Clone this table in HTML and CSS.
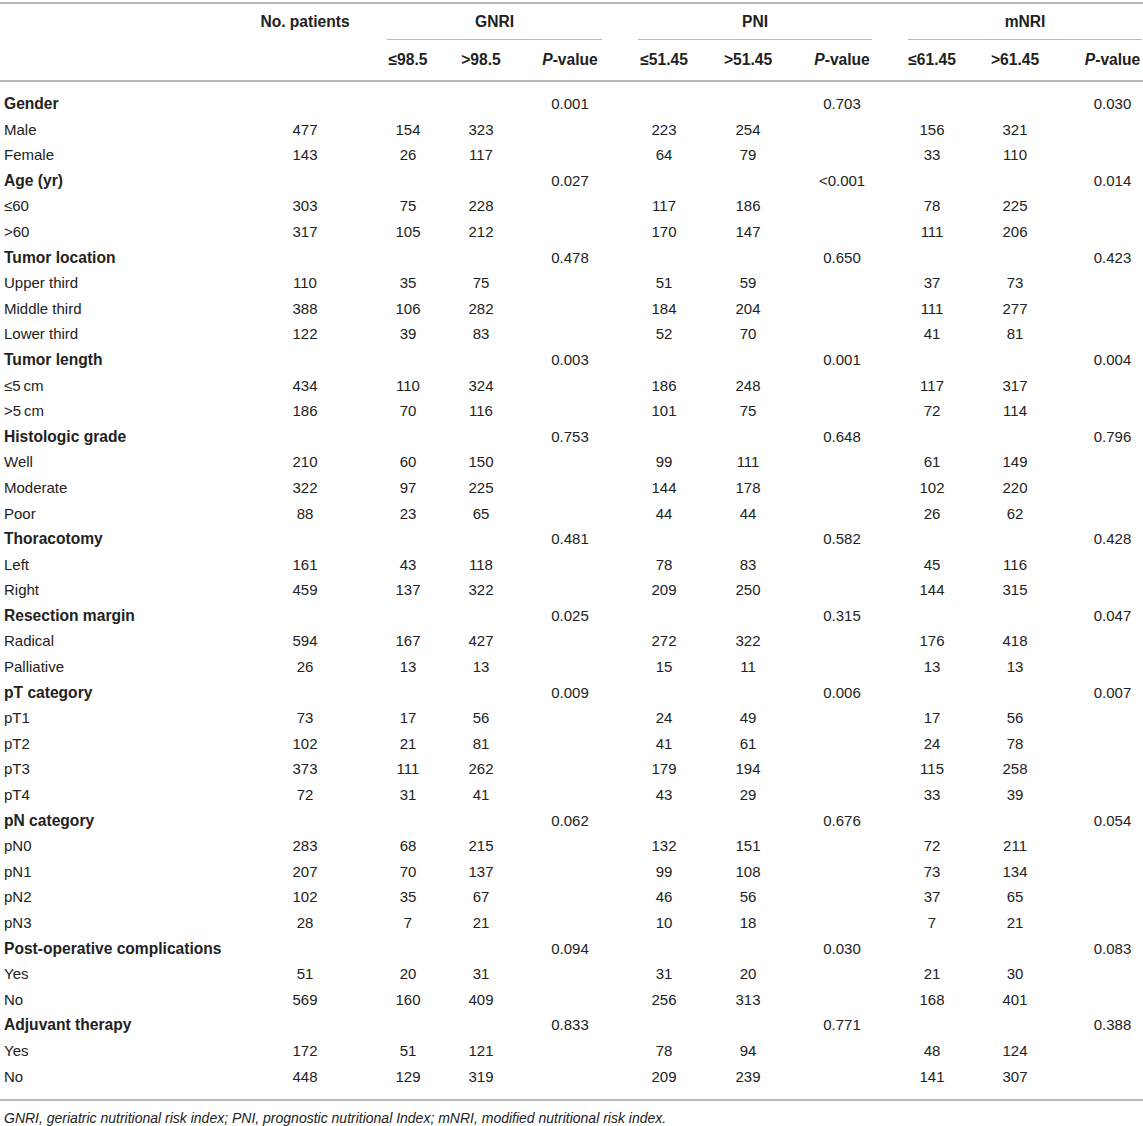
FILE: index.html
```html
<!DOCTYPE html>
<html lang="en">
<head>
    <meta charset="utf-8">
    <link rel="stylesheet" href="styles.css">
</head>
<body>
    <table class="stats">
        <colgroup>
            <col class="c-label">
            <col class="c-no">
            <col class="c-g1"><col class="c-g2"><col class="c-g3">
            <col class="c-p1"><col class="c-p2"><col class="c-p3">
            <col class="c-m1"><col class="c-m2"><col class="c-m3">
        </colgroup>
        <thead>
            <tr class="head-top">
                <th></th>
                <th>No. patients</th>
                <th colspan="3" class="group"><div class="grp grp-g">GNRI</div></th>
                <th colspan="3" class="group"><div class="grp grp-p">PNI</div></th>
                <th colspan="3" class="group"><div class="grp grp-m">mNRI</div></th>
            </tr>
            <tr class="head-sub">
                <th></th>
                <th></th>
                <th>≤98.5</th><th>&gt;98.5</th><th class="pv"><i>P</i>-value</th>
                <th>≤51.45</th><th>&gt;51.45</th><th class="pv"><i>P</i>-value</th>
                <th>≤61.45</th><th>&gt;61.45</th><th class="pv last"><i>P</i>-value</th>
            </tr>
        </thead>
        <tbody>
            <tr class="cat"><td>Gender</td><td></td><td></td><td></td><td>0.001</td><td></td><td></td><td>0.703</td><td></td><td></td><td class="last">0.030</td></tr>
            <tr><td>Male</td><td>477</td><td>154</td><td>323</td><td></td><td>223</td><td>254</td><td></td><td>156</td><td>321</td><td class="last"></td></tr>
            <tr><td>Female</td><td>143</td><td>26</td><td>117</td><td></td><td>64</td><td>79</td><td></td><td>33</td><td>110</td><td class="last"></td></tr>

            <tr class="cat"><td>Age (yr)</td><td></td><td></td><td></td><td>0.027</td><td></td><td></td><td>&lt;0.001</td><td></td><td></td><td class="last">0.014</td></tr>
            <tr><td>≤60</td><td>303</td><td>75</td><td>228</td><td></td><td>117</td><td>186</td><td></td><td>78</td><td>225</td><td class="last"></td></tr>
            <tr><td>&gt;60</td><td>317</td><td>105</td><td>212</td><td></td><td>170</td><td>147</td><td></td><td>111</td><td>206</td><td class="last"></td></tr>

            <tr class="cat"><td>Tumor location</td><td></td><td></td><td></td><td>0.478</td><td></td><td></td><td>0.650</td><td></td><td></td><td class="last">0.423</td></tr>
            <tr><td>Upper third</td><td>110</td><td>35</td><td>75</td><td></td><td>51</td><td>59</td><td></td><td>37</td><td>73</td><td class="last"></td></tr>
            <tr><td>Middle third</td><td>388</td><td>106</td><td>282</td><td></td><td>184</td><td>204</td><td></td><td>111</td><td>277</td><td class="last"></td></tr>
            <tr><td>Lower third</td><td>122</td><td>39</td><td>83</td><td></td><td>52</td><td>70</td><td></td><td>41</td><td>81</td><td class="last"></td></tr>

            <tr class="cat"><td>Tumor length</td><td></td><td></td><td></td><td>0.003</td><td></td><td></td><td>0.001</td><td></td><td></td><td class="last">0.004</td></tr>
            <tr><td>≤5&#8201;cm</td><td>434</td><td>110</td><td>324</td><td></td><td>186</td><td>248</td><td></td><td>117</td><td>317</td><td class="last"></td></tr>
            <tr><td>&gt;5&#8201;cm</td><td>186</td><td>70</td><td>116</td><td></td><td>101</td><td>75</td><td></td><td>72</td><td>114</td><td class="last"></td></tr>

            <tr class="cat"><td>Histologic grade</td><td></td><td></td><td></td><td>0.753</td><td></td><td></td><td>0.648</td><td></td><td></td><td class="last">0.796</td></tr>
            <tr><td>Well</td><td>210</td><td>60</td><td>150</td><td></td><td>99</td><td>111</td><td></td><td>61</td><td>149</td><td class="last"></td></tr>
            <tr><td>Moderate</td><td>322</td><td>97</td><td>225</td><td></td><td>144</td><td>178</td><td></td><td>102</td><td>220</td><td class="last"></td></tr>
            <tr><td>Poor</td><td>88</td><td>23</td><td>65</td><td></td><td>44</td><td>44</td><td></td><td>26</td><td>62</td><td class="last"></td></tr>

            <tr class="cat"><td>Thoracotomy</td><td></td><td></td><td></td><td>0.481</td><td></td><td></td><td>0.582</td><td></td><td></td><td class="last">0.428</td></tr>
            <tr><td>Left</td><td>161</td><td>43</td><td>118</td><td></td><td>78</td><td>83</td><td></td><td>45</td><td>116</td><td class="last"></td></tr>
            <tr><td>Right</td><td>459</td><td>137</td><td>322</td><td></td><td>209</td><td>250</td><td></td><td>144</td><td>315</td><td class="last"></td></tr>

            <tr class="cat"><td>Resection margin</td><td></td><td></td><td></td><td>0.025</td><td></td><td></td><td>0.315</td><td></td><td></td><td class="last">0.047</td></tr>
            <tr><td>Radical</td><td>594</td><td>167</td><td>427</td><td></td><td>272</td><td>322</td><td></td><td>176</td><td>418</td><td class="last"></td></tr>
            <tr><td>Palliative</td><td>26</td><td>13</td><td>13</td><td></td><td>15</td><td>11</td><td></td><td>13</td><td>13</td><td class="last"></td></tr>

            <tr class="cat"><td>pT category</td><td></td><td></td><td></td><td>0.009</td><td></td><td></td><td>0.006</td><td></td><td></td><td class="last">0.007</td></tr>
            <tr><td>pT1</td><td>73</td><td>17</td><td>56</td><td></td><td>24</td><td>49</td><td></td><td>17</td><td>56</td><td class="last"></td></tr>
            <tr><td>pT2</td><td>102</td><td>21</td><td>81</td><td></td><td>41</td><td>61</td><td></td><td>24</td><td>78</td><td class="last"></td></tr>
            <tr><td>pT3</td><td>373</td><td>111</td><td>262</td><td></td><td>179</td><td>194</td><td></td><td>115</td><td>258</td><td class="last"></td></tr>
            <tr><td>pT4</td><td>72</td><td>31</td><td>41</td><td></td><td>43</td><td>29</td><td></td><td>33</td><td>39</td><td class="last"></td></tr>

            <tr class="cat"><td>pN category</td><td></td><td></td><td></td><td>0.062</td><td></td><td></td><td>0.676</td><td></td><td></td><td class="last">0.054</td></tr>
            <tr><td>pN0</td><td>283</td><td>68</td><td>215</td><td></td><td>132</td><td>151</td><td></td><td>72</td><td>211</td><td class="last"></td></tr>
            <tr><td>pN1</td><td>207</td><td>70</td><td>137</td><td></td><td>99</td><td>108</td><td></td><td>73</td><td>134</td><td class="last"></td></tr>
            <tr><td>pN2</td><td>102</td><td>35</td><td>67</td><td></td><td>46</td><td>56</td><td></td><td>37</td><td>65</td><td class="last"></td></tr>
            <tr><td>pN3</td><td>28</td><td>7</td><td>21</td><td></td><td>10</td><td>18</td><td></td><td>7</td><td>21</td><td class="last"></td></tr>

            <tr class="cat"><td>Post-operative complications</td><td></td><td></td><td></td><td>0.094</td><td></td><td></td><td>0.030</td><td></td><td></td><td class="last">0.083</td></tr>
            <tr><td>Yes</td><td>51</td><td>20</td><td>31</td><td></td><td>31</td><td>20</td><td></td><td>21</td><td>30</td><td class="last"></td></tr>
            <tr><td>No</td><td>569</td><td>160</td><td>409</td><td></td><td>256</td><td>313</td><td></td><td>168</td><td>401</td><td class="last"></td></tr>

            <tr class="cat"><td>Adjuvant therapy</td><td></td><td></td><td></td><td>0.833</td><td></td><td></td><td>0.771</td><td></td><td></td><td class="last">0.388</td></tr>
            <tr><td>Yes</td><td>172</td><td>51</td><td>121</td><td></td><td>78</td><td>94</td><td></td><td>48</td><td>124</td><td class="last"></td></tr>
            <tr><td>No</td><td>448</td><td>129</td><td>319</td><td></td><td>209</td><td>239</td><td></td><td>141</td><td>307</td><td class="last"></td></tr>
        </tbody>
    </table>
    <p class="note">GNRI, geriatric nutritional risk index; PNI, prognostic nutritional Index; mNRI, modified nutritional risk index.</p>
</body>
</html>
```

FILE: styles.css
```css
/* General */
* {
    margin: 0;
    padding: 0;
    box-sizing: border-box;
}

body {
    font-family: "Liberation Sans", Arial, sans-serif;
    font-size: 15px;
    color: #222;
    background: #fff;
    padding-top: 2px;
}

/* Table */
.stats {
    width: 1143px;
    border-collapse: collapse;
    table-layout: fixed;
    border-top: 2px solid #b8b8b8;
    border-bottom: 2px solid #b8b8b8;
}

.c-label { width: 240px; }
.c-no { width: 130px; }
.c-g1 { width: 76px; }
.c-g2 { width: 70px; }
.c-g3 { width: 108px; }
.c-p1 { width: 80px; }
.c-p2 { width: 88px; }
.c-p3 { width: 100px; }
.c-m1 { width: 80px; }
.c-m2 { width: 86px; }
.c-m3 { width: 85px; }

th, td {
    text-align: center;
    white-space: nowrap;
    padding: 0;
}

th {
    font-weight: bold;
    font-size: 15.6px;
}

/* Header rows */
.head-top th {
    height: 36px;
    line-height: 36px;
    vertical-align: top;
}

.grp {
    height: 36px;
    border-bottom: 1px solid #b8b8b8;
}

.grp-g { margin: 0 22px 0 17px; }
.grp-p { margin: 0 20px 0 14px; }
.grp-m { margin: 0 1px 0 16px; }

.head-sub th {
    height: 40px;
    line-height: 40px;
    border-bottom: 2px solid #b8b8b8;
}

.last {
    padding-left: 24px;
}

/* Body rows */
tbody td {
    height: 25.6px;
    line-height: 25.6px;
}

tbody td:first-child {
    text-align: left;
    padding-left: 4px;
}

tbody tr.cat td:first-child {
    font-weight: bold;
    font-size: 15.6px;
}

tbody tr:first-child td {
    height: 34.6px;
    padding-top: 9px;
}

tbody tr:last-child td {
    height: 35.6px;
    padding-bottom: 10px;
}

/* Footnote */
.note {
    font-style: italic;
    font-size: 14px;
    padding: 9px 0 0 4px;
}
```
